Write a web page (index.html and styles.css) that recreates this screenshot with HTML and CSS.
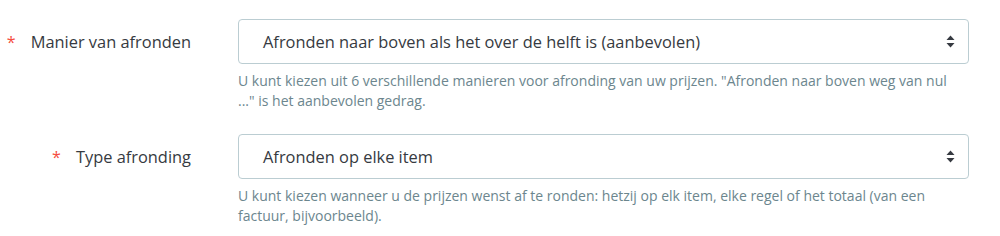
FILE: index.html
```html
<!DOCTYPE html>
<html lang="nl">
<head>
    <meta charset="UTF-8">
    <title>Afronding</title>
    <link rel="stylesheet" href="styles.css">
</head>
<body>
    <form class="form-rounding">
        <!-- Manier van afronden -->
        <div class="form-row">
            <label class="form-label"><span class="required">*</span>Manier van afronden</label>
            <div class="form-field">
                <div class="select-box">
                    <span class="select-value">Afronden naar boven als het over de helft is (aanbevolen)</span>
                    <svg class="select-arrows" width="9" height="13" viewBox="0 0 9 13">
                        <path d="M4.5 0.5 L8.5 5 L0.5 5 Z" fill="#363a41"/>
                        <path d="M4.5 12.5 L8.5 8 L0.5 8 Z" fill="#363a41"/>
                    </svg>
                </div>
                <p class="help-text">U kunt kiezen uit 6 verschillende manieren voor afronding van uw prijzen. "Afronden naar boven weg van nul ..." is het aanbevolen gedrag.</p>
            </div>
        </div>

        <!-- Type afronding -->
        <div class="form-row">
            <label class="form-label"><span class="required">*</span>Type afronding</label>
            <div class="form-field">
                <div class="select-box">
                    <span class="select-value">Afronden op elke item</span>
                    <svg class="select-arrows" width="9" height="13" viewBox="0 0 9 13">
                        <path d="M4.5 0.5 L8.5 5 L0.5 5 Z" fill="#363a41"/>
                        <path d="M4.5 12.5 L8.5 8 L0.5 8 Z" fill="#363a41"/>
                    </svg>
                </div>
                <p class="help-text">U kunt kiezen wanneer u de prijzen wenst af te ronden: hetzij op elk item, elke regel of het totaal (van een factuur, bijvoorbeeld).</p>
            </div>
        </div>
    </form>
</body>
</html>
```

FILE: styles.css
```css
* {
    margin: 0;
    padding: 0;
    box-sizing: border-box;
}

body {
    font-family: 'Open Sans', 'Liberation Sans', sans-serif;
    background-color: #fff;
    color: #363a41;
}

.form-rounding {
    padding-top: 19px;
}

.form-row {
    display: grid;
    grid-template-columns: 191px 731px;
    column-gap: 47px;
    margin-bottom: 23px;
}

.form-row:last-child {
    margin-bottom: 0;
}

.form-label {
    display: flex;
    justify-content: flex-end;
    align-items: center;
    height: 45px;
    font-size: 16.4px;
    color: #363a41;
}

.required {
    color: #f54c3e;
    font-size: 16px;
    margin-right: 15px;
}

.select-box {
    display: flex;
    align-items: center;
    justify-content: space-between;
    height: 45px;
    padding: 0 13px 0 24px;
    border: 1px solid #bbcdd2;
    border-radius: 4px;
    background-color: #fff;
    font-size: 16.4px;
    color: #363a41;
}

.select-arrows {
    flex-shrink: 0;
}

.help-text {
    max-width: 716px;
    margin-top: 7px;
    font-size: 14px;
    line-height: 20px;
    color: #6c868e;
}
```
